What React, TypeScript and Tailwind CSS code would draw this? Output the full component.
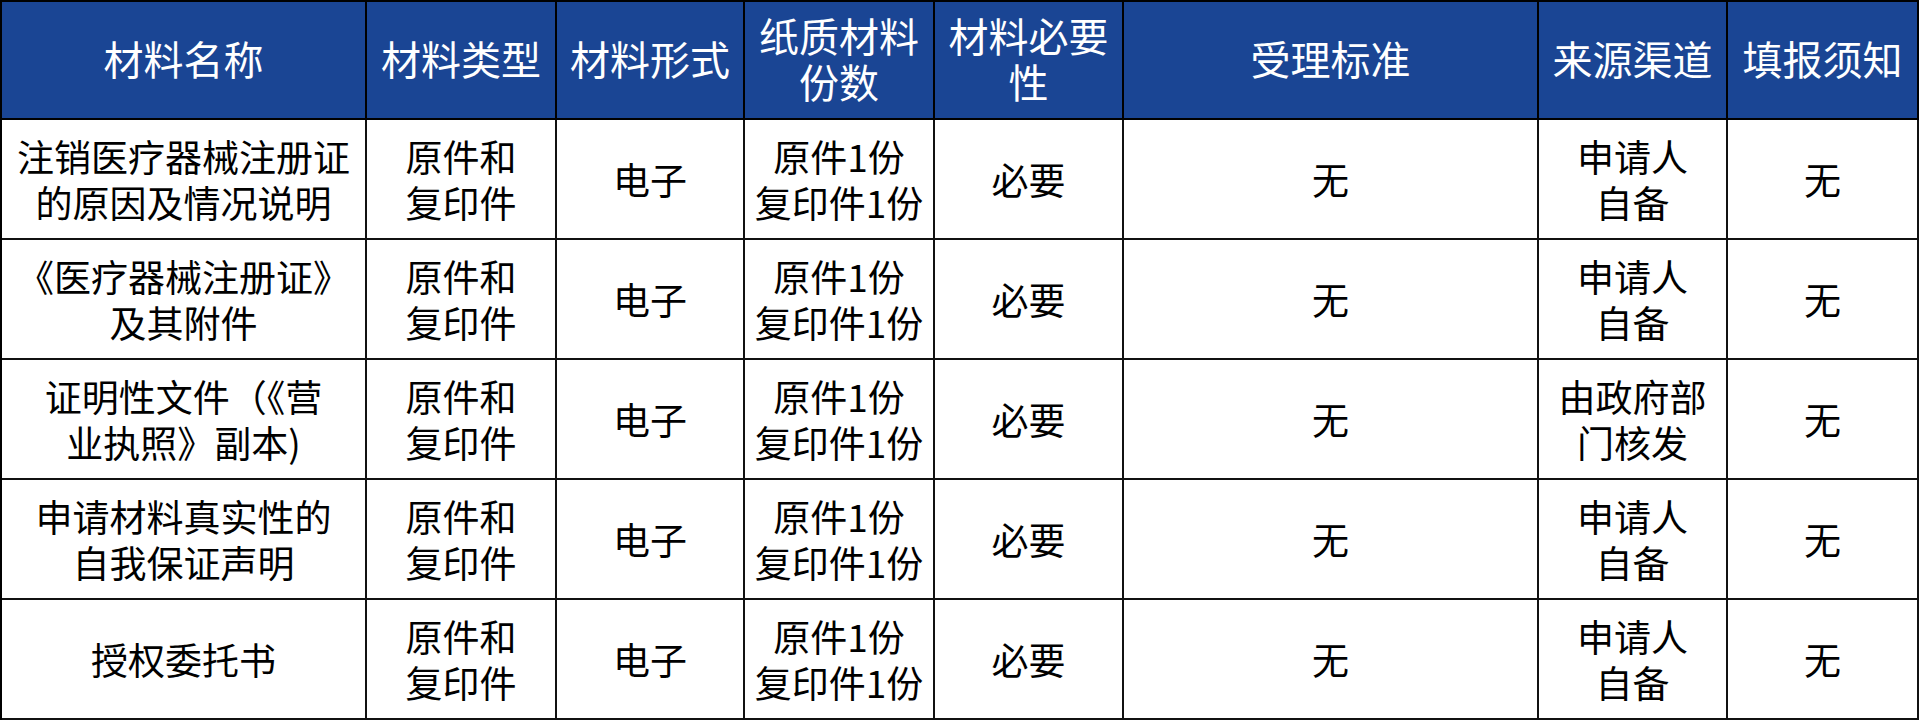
const headers = [
  ['材料名称'],
  ['材料类型'],
  ['材料形式'],
  ['纸质材料', '份数'],
  ['材料必要', '性'],
  ['受理标准'],
  ['来源渠道'],
  ['填报须知'],
];

const rows: string[][][] = [
  [
    ['注销医疗器械注册证', '的原因及情况说明'],
    ['原件和', '复印件'],
    ['电子'],
    ['原件1份', '复印件1份'],
    ['必要'],
    ['无'],
    ['申请人', '自备'],
    ['无'],
  ],
  [
    ['《医疗器械注册证》', '及其附件'],
    ['原件和', '复印件'],
    ['电子'],
    ['原件1份', '复印件1份'],
    ['必要'],
    ['无'],
    ['申请人', '自备'],
    ['无'],
  ],
  [
    ['证明性文件（《营', '业执照》副本)'],
    ['原件和', '复印件'],
    ['电子'],
    ['原件1份', '复印件1份'],
    ['必要'],
    ['无'],
    ['由政府部', '门核发'],
    ['无'],
  ],
  [
    ['申请材料真实性的', '自我保证声明'],
    ['原件和', '复印件'],
    ['电子'],
    ['原件1份', '复印件1份'],
    ['必要'],
    ['无'],
    ['申请人', '自备'],
    ['无'],
  ],
  [
    ['授权委托书'],
    ['原件和', '复印件'],
    ['电子'],
    ['原件1份', '复印件1份'],
    ['必要'],
    ['无'],
    ['申请人', '自备'],
    ['无'],
  ],
];

export default function App() {
  return (
    <div
      className="w-[1920px] h-[720px] bg-white overflow-hidden"
      style={{ fontFamily: '"Noto Sans CJK SC", "Noto Sans", sans-serif' }}
    >
      <div className="grid grid-cols-[365px_190px_188px_190px_189px_415px_189px_191px] border-l-2 border-t-2 border-black w-fit">
        {headers.map((lines, i) => (
          <div
            key={`h${i}`}
            className="h-[118px] bg-[#1a4594] border-r-2 border-b-2 border-black flex flex-col items-center justify-center text-white text-[40px] pb-[4px]"
          >
            {lines.map((l, j) => (
              <div key={j} className="h-[46px] leading-[46px] whitespace-nowrap">
                {l}
              </div>
            ))}
          </div>
        ))}
        {rows.map((row, r) =>
          row.map((lines, c) => (
            <div
              key={`r${r}c${c}`}
              className="h-[120px] border-r-2 border-b-2 border-[#111] flex flex-col items-center justify-center text-black text-[37px]"
            >
              {lines.map((l, j) => (
                <div key={j} className="h-[46px] leading-[46px] whitespace-nowrap">
                  {l}
                </div>
              ))}
            </div>
          ))
        )}
      </div>
    </div>
  );
}
